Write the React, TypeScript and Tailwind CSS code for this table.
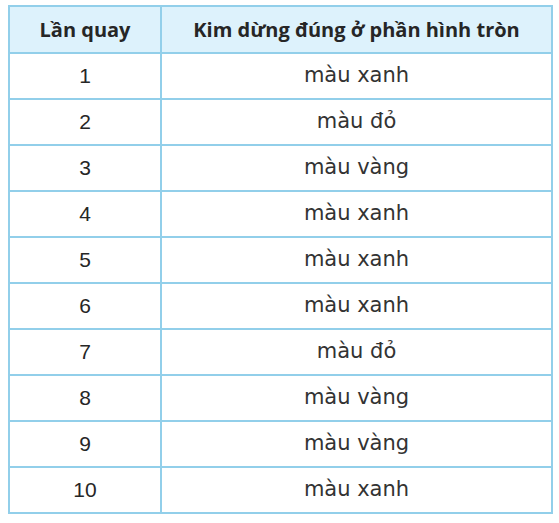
const rows: [string, string][] = [
  ["1", "màu xanh"],
  ["2", "màu đỏ"],
  ["3", "màu vàng"],
  ["4", "màu xanh"],
  ["5", "màu xanh"],
  ["6", "màu xanh"],
  ["7", "màu đỏ"],
  ["8", "màu vàng"],
  ["9", "màu vàng"],
  ["10", "màu xanh"],
]

export default function App() {
  return (
    <div className="w-[559px] h-[523px] bg-white pt-[5px] pl-[8px]">
      <table className="border-collapse w-[545px] text-[#262626]">
        <thead>
          <tr className="bg-[#ddf2fc] h-[47px]">
            <th className="w-[152px] border-2 border-[#92cfea] font-['Open_Sans',sans-serif] font-bold text-[20px]">
              Lần quay
            </th>
            <th className="border-2 border-[#92cfea] font-['Open_Sans',sans-serif] font-bold text-[20px]">
              Kim dừng đúng ở phần hình tròn
            </th>
          </tr>
        </thead>
        <tbody>
          {rows.map(([n, c]) => (
            <tr key={n} className="h-[46px]">
              <td className="border-2 border-[#92cfea] text-center font-['Liberation_Sans',sans-serif] text-[21px]">
                {n}
              </td>
              <td className="border-2 border-[#92cfea] text-center font-['DejaVu_Sans',sans-serif] text-[21px] text-[#333]">
                {c}
              </td>
            </tr>
          ))}
        </tbody>
      </table>
    </div>
  )
}
